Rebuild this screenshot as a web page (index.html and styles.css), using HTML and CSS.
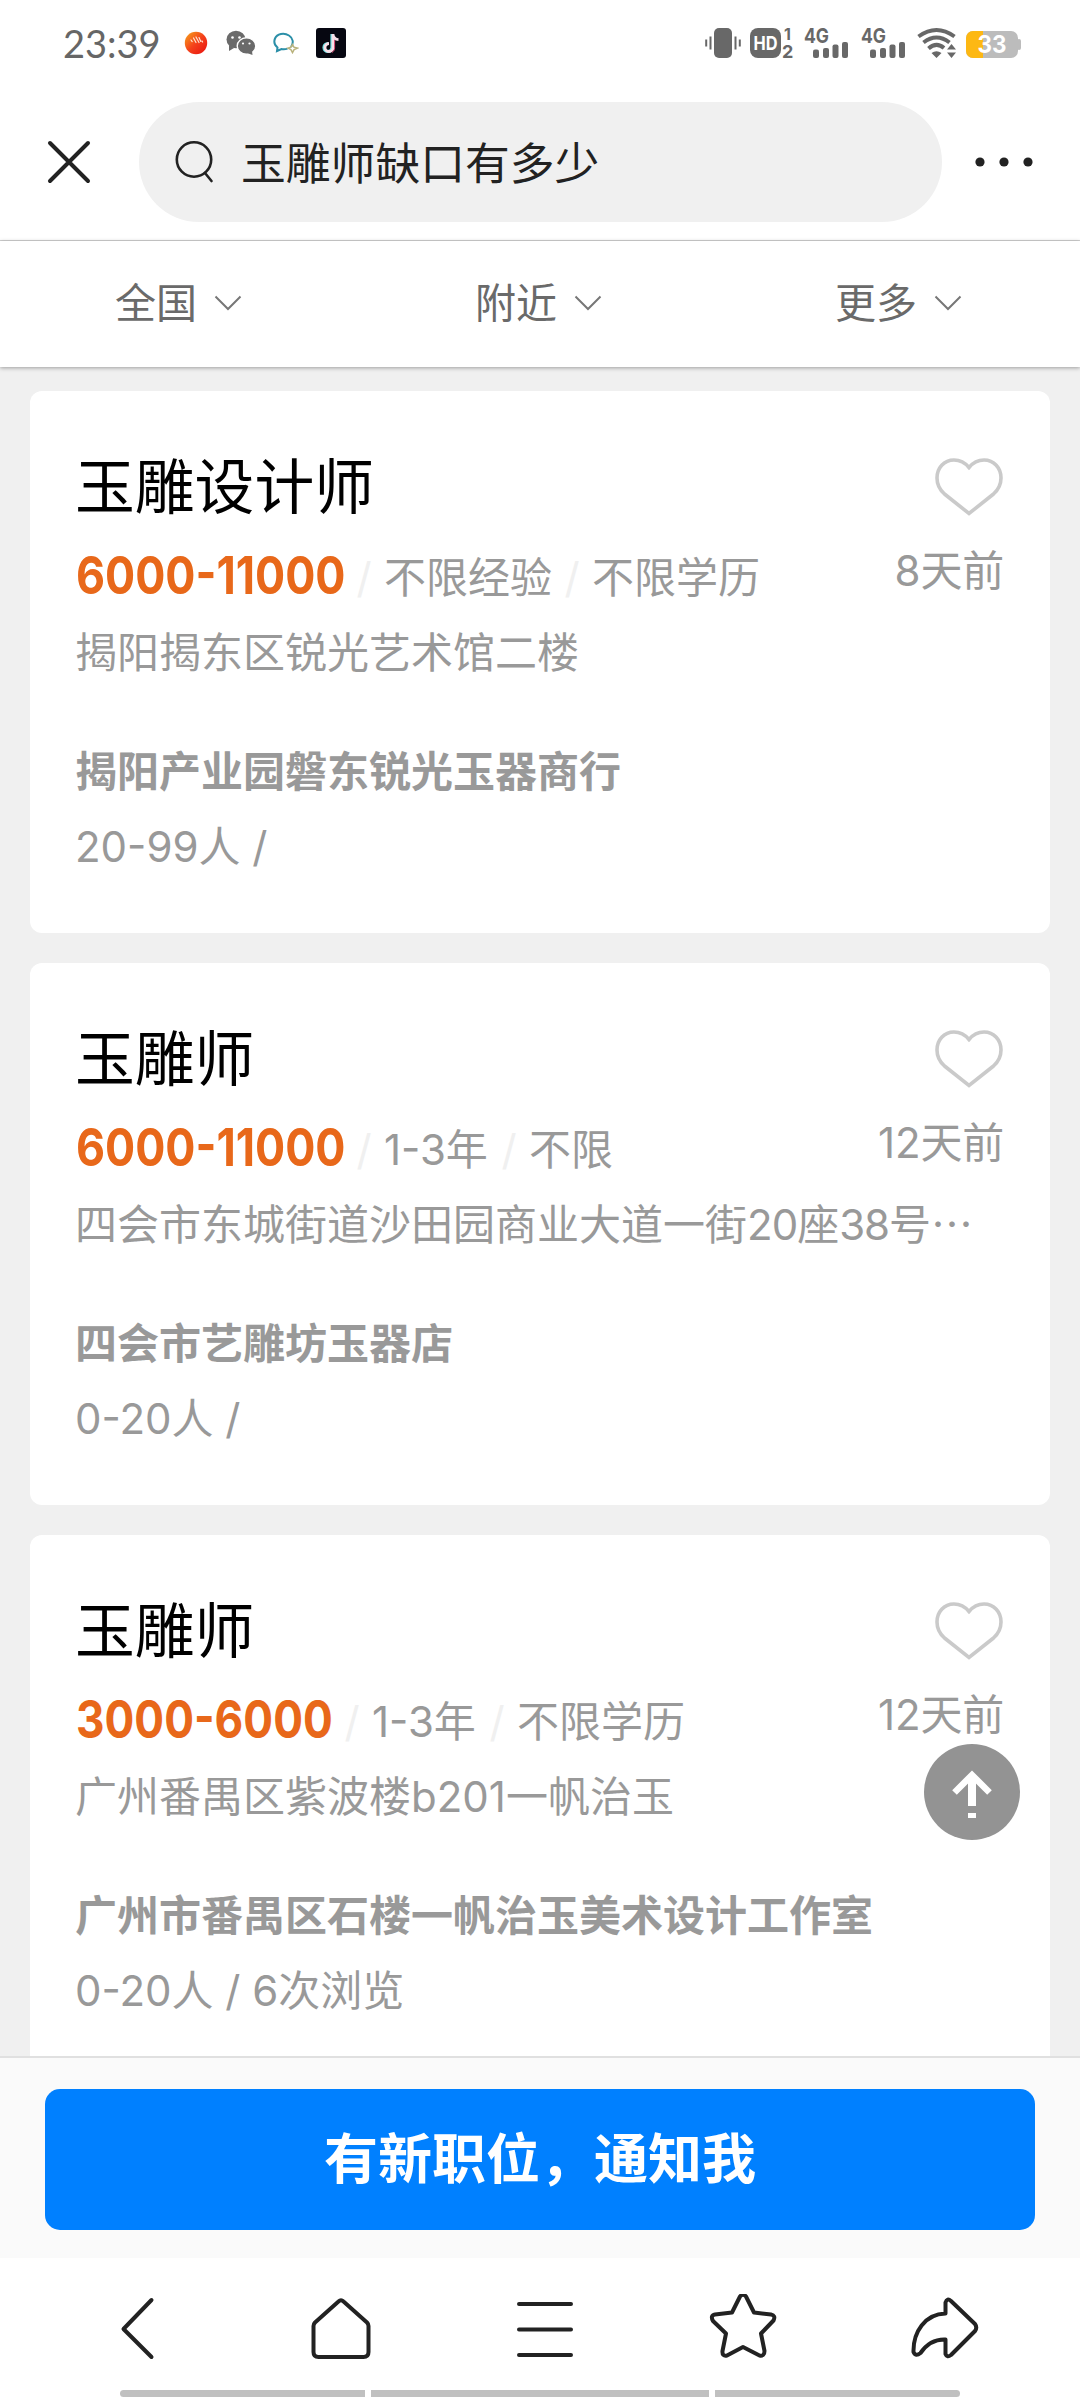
FILE: index.html
```html
<!DOCTYPE html>
<html lang="zh-CN">
<head>
<meta charset="utf-8">
<title>玉雕师缺口有多少</title>
<link rel="stylesheet" href="styles.css">
</head>
<body>
<svg width="0" height="0" class="defs">
  <symbol id="heart" viewBox="0 0 68 58"><path d="M34 9.500C29.500 4 24.500 2 19 2C9 2 2 10 2 20C2 27.500 5 32 9.500 36L34 55.500L58.500 36C63 32 66 27.500 66 20C66 10 59 2 49 2C43.500 2 38.500 4 34 9.500Z" fill="none" stroke="#cacaca" stroke-width="3.600"/></symbol>
  <symbol id="chevron" viewBox="0 0 28 16"><path d="M1.500 1.500L14 14L26.500 1.500" fill="none" stroke="#777" stroke-width="2"/></symbol>
  <symbol id="bars" viewBox="0 0 46 32">
    <rect x="9" y="22.500" width="6" height="8.500" rx="2"/><rect x="19" y="21" width="6" height="10" rx="2"/><rect x="28.500" y="17.500" width="6" height="13.500" rx="2"/><rect x="38" y="15" width="6" height="16" rx="2"/>
  </symbol>
</svg>
<div class="screen">
  <header class="status">
    <div class="status-left">
      <span class="time">23:39</span>
      <svg class="app-ball" width="24" height="24" viewBox="0 0 24 24">
        <defs><linearGradient id="fire" x1="0" y1="0" x2="1" y2="1"><stop offset="0" stop-color="#f6a81c"/><stop offset=".5" stop-color="#f4411b"/><stop offset="1" stop-color="#e8100f"/></linearGradient></defs>
        <circle cx="12" cy="12" r="11.200" fill="url(#fire)"/>
        <path d="M7 9l1.200 1.600M9.500 7l2.500 4.500M12 6l3 5.500M15 6.500l1.800 4M18 10l.6 1" stroke="#ffe3d0" stroke-width="1.200" stroke-linecap="round"/>
      </svg>
      <svg class="app-wechat" width="30" height="26" viewBox="0 0 30 26">
        <ellipse cx="10" cy="9.500" rx="9.500" ry="8.800" fill="#6a6a6a"/><path d="M3 15l0 6 5-3z" fill="#6a6a6a"/>
        <ellipse cx="20.500" cy="16" rx="9.300" ry="8.200" fill="#6a6a6a" stroke="#fff" stroke-width="1.400"/><path d="M21 23l5.500 2-.5-4z" fill="#6a6a6a"/>
        <circle cx="6.500" cy="7.500" r="1.300" fill="#fff"/><circle cx="13.500" cy="7.500" r="1.300" fill="#fff"/><circle cx="17" cy="13.500" r="1.100" fill="#fff"/><circle cx="23.500" cy="13.500" r="1.100" fill="#fff"/>
      </svg>
      <svg class="app-bubble" width="26" height="22" viewBox="0 0 26 22" fill="none" stroke-width="2">
        <path d="M18 15c3-4 2-9-2-11.500C11 .2 4 1.600 2 6.500C.6 10 2 13.500 4.500 15.500L4 19l4.500-2c2 .4 4 .3 6-.4" stroke="#2b8fa8"/>
        <path d="M19.500 12.500l1.400 2.600 3.600 1-3.400 1.500-1.600 3-1.600-3-3-1.400 3-1.100z" stroke="#b9b27c" stroke-width="1.500"/>
      </svg>
      <svg class="app-note" width="30" height="30" viewBox="0 0 30 30">
        <rect width="30" height="30" rx="3" fill="#060711"/>
        <path d="M16 6v13.500a4 4 0 1 1-4-4" fill="none" stroke="#6fe4e8" stroke-width="3.200"/>
        <path d="M17 6v13.500a4 4 0 1 1-4-4M17 6.500c.4 3 2.500 5 5.500 5.200" fill="none" stroke="#f9dfe8" stroke-width="2.800"/>
        <path d="M18.600 12v8c0 2-1 3.500-2.600 4.400" fill="none" stroke="#e0507a" stroke-width="1"/>
      </svg>
    </div>
    <svg class="status-right" width="320" height="48" viewBox="0 -8 320 48" fill="#686868">
      <rect x="9" y="1" width="18" height="30" rx="5"/>
      <path d="M5.500 9.500v13M1.200 12.500v7M30.500 9.500v13M34.800 12.500v7" stroke="#686868" stroke-width="2"/>
      <rect x="45" y="1" width="31" height="30" rx="8"/>
      <text x="60.500" y="23" font-size="19" text-anchor="middle" class="tiny" fill="#fff" textLength="24" lengthAdjust="spacingAndGlyphs">HD</text>
      <text x="79" y="13" font-size="16" class="tiny">1</text><text x="77" y="31" font-size="18" class="tiny">2</text>
      <text x="99" y="15.500" font-size="20" class="tiny" textLength="25" lengthAdjust="spacingAndGlyphs">4G</text>
      <use href="#bars" x="99" y="0" width="46" height="32"/>
      <text x="156" y="15.500" font-size="20" class="tiny" textLength="25" lengthAdjust="spacingAndGlyphs">4G</text>
      <use href="#bars" x="156" y="0" width="46" height="32"/>
      <g fill="none" stroke="#686868" stroke-width="4"><path d="M213.500 9.500Q231.500 -3.500 249.500 9.500"/><path d="M218.500 15.500Q231.500 5.500 244.500 15.500"/><path d="M223.500 21.500Q231.500 14.500 239 21"/></g>
      <path d="M226.500 26Q231.500 22.500 236.500 26L231.500 31zM242 22.500l4.500-5.500 4.500 5.500zM242 25.500l4.500 5.500 4.500-5.500z"/>
      <clipPath id="cell"><rect x="261" y="4" width="52" height="27" rx="7"/></clipPath>
      <g clip-path="url(#cell)"><rect x="261" y="4" width="52" height="27" fill="#bcbcbc"/><rect x="261" y="4" width="17" height="27" fill="#fdb813"/></g>
      <rect x="312" y="12" width="4" height="11" rx="2" fill="#bcbcbc"/>
      <text x="287" y="26" font-size="24" text-anchor="middle" class="tiny" fill="#fff" textLength="29" lengthAdjust="spacingAndGlyphs">33</text>
    </svg>
  </header>

  <nav class="searchbar">
    <svg class="close" width="44" height="44" viewBox="0 0 44 44"><path d="M3 3L41 41M41 3L3 41" stroke="#222" stroke-width="4" stroke-linecap="round"/></svg>
    <div class="search">
      <svg width="40" height="44" viewBox="0 0 40 44" fill="none" stroke="#222" stroke-width="2.600" stroke-linecap="round"><circle cx="19" cy="19.500" r="17.200"/><path d="M30 33L36.500 41"/></svg>
      <span>玉雕师缺口有多少</span>
    </div>
    <svg class="dots" width="60" height="12" viewBox="0 0 60 12" fill="#222"><circle cx="6" cy="6" r="4.600"/><circle cx="30" cy="6" r="4.600"/><circle cx="54" cy="6" r="4.600"/></svg>
  </nav>

  <div class="filters">
    <div class="filter">全国<svg width="28" height="16"><use href="#chevron"/></svg></div>
    <div class="filter">附近<svg width="28" height="16"><use href="#chevron"/></svg></div>
    <div class="filter">更多<svg width="28" height="16"><use href="#chevron"/></svg></div>
  </div>

  <main class="list">
    <article class="card">
      <div class="head"><h2>玉雕设计师</h2><svg width="68" height="58"><use href="#heart"/></svg></div>
      <div class="row"><span class="pay long"><b>6000-11000</b></span><i>/</i><span>不限经验</span><i>/</i><span>不限学历</span><time>8天前</time></div>
      <p class="addr">揭阳揭东区锐光艺术馆二楼</p>
      <p class="firm">揭阳产业园磐东锐光玉器商行</p>
      <p class="size">20-99人 /</p>
    </article>
    <article class="card">
      <div class="head"><h2>玉雕师</h2><svg width="68" height="58"><use href="#heart"/></svg></div>
      <div class="row"><span class="pay long"><b>6000-11000</b></span><i>/</i><span class="years">1-3年</span><i>/</i><span>不限</span><time>12天前</time></div>
      <p class="addr">四会市东城街道沙田园商业大道一街<span class="num">20</span>座<span class="num">38</span>号<span class="more">…</span></p>
      <p class="firm">四会市艺雕坊玉器店</p>
      <p class="size">0-20人 /</p>
    </article>
    <article class="card">
      <div class="head"><h2>玉雕师</h2><svg width="68" height="58"><use href="#heart"/></svg></div>
      <div class="row"><span class="pay short"><b>3000-6000</b></span><i>/</i><span class="years">1-3年</span><i>/</i><span>不限学历</span><time>12天前</time></div>
      <p class="addr">广州番禺区紫波楼b201一帆治玉</p>
      <p class="firm">广州市番禺区石楼一帆治玉美术设计工作室</p>
      <p class="size">0-20人 / 6次浏览</p>
    </article>
    <button class="to-top" aria-label="返回顶部"><svg width="96" height="96" viewBox="0 0 96 96"><path d="M30.500 48.500L48 31L65.500 48.500" fill="none" stroke="#fff" stroke-width="6.500"/><rect x="44" y="31" width="8" height="31" fill="#fff"/><rect x="44" y="69" width="8" height="5" fill="#fff"/></svg></button>
  </main>

  <div class="notify"><button>有新职位，通知我</button></div>

  <footer class="toolbar">
    <div class="icons">
      <svg width="68" height="68" viewBox="0 0 68 68"><path d="M49.500 6L21.500 35L49.500 63"/></svg>
      <svg width="68" height="68" viewBox="0 0 68 68"><g transform="translate(3 1)"><path d="M31.500 6.500Q34 4 36.500 6.500L60 27.500Q61.500 29 61.500 31V57Q61.500 62 56.500 62H11.500Q6.500 62 6.500 57V31Q6.500 29 8 27.500Z"/></g></svg>
      <svg width="68" height="68" viewBox="0 0 68 68"><path d="M12 10H64M12 35.500H64M12 61H64"/></svg>
      <svg width="68" height="68" viewBox="0 0 68 68"><path d="M31 2.500Q34 -1 37 2.500L45 18.500L62 20.500Q67 21.500 64.500 26.500L52 39.500L55.500 57Q55.500 62.500 50.500 61.500L34 53L18 61.500Q13 62.500 13.500 57L17 39.500L4 27Q1 21.500 6 20.500L23 18.500Z"/></svg>
      <svg width="68" height="68" viewBox="0 0 68 68"><path d="M34.500 19.500V8.500Q36 3.500 40 7L64 30Q66.500 33.500 64 37L40 61Q36 64 34.500 60V45.500C23 45 15 51 9.500 59Q4.500 63 2.500 58C2 38 14 20 34.500 19.500Z"/></svg>
    </div>
    <div class="grips"><span></span><span></span><span></span></div>
  </footer>
</div>
</body>
</html>
```
FILE: styles.css
```css
* { box-sizing: border-box; }
body, h2, p { margin: 0; }
button { border: 0; padding: 0; font: inherit; }
svg { display: block; flex: none; }
.defs { position: absolute; }

.screen {
  width: 1080px;
  height: 2400px;
  display: flex;
  flex-direction: column;
  overflow: hidden;
  background: #fff;
  font-family: Inter, "Noto Sans CJK SC", sans-serif;
}

.status {
  height: 86px;
  flex: none;
  display: flex;
  align-items: center;
  justify-content: space-between;
  padding: 0 55px 0 62px;
}
.status-left { display: flex; align-items: center; }
.time {
  width: 122px;
  padding-left: 1px;
  font: 38px/44px Lato, sans-serif;
  color: #666;
}
.app-wechat { margin-left: 18px; }
.app-bubble { margin-left: 17px; }
.app-note { margin-left: 17px; }
.tiny { font-family: Inter, sans-serif; font-weight: 700; }

.searchbar {
  height: 155px;
  flex: none;
  display: flex;
  align-items: center;
  padding: 0 46px 3px 47px;
  border-bottom: 1px solid #d2d2d2;
}
.search {
  width: 803px;
  height: 120px;
  margin-left: 48px;
  padding-left: 36px;
  display: flex;
  align-items: center;
  gap: 26px;
  border-radius: 60px;
  background: #f0f0f0;
  color: #222;
  font-size: 44.800px;
  line-height: 60px;
}
.search span { padding-top: 4px; }
.dots { margin-left: 32px; }

.filters {
  height: 126px;
  flex: none;
  display: grid;
  grid-template-columns: repeat(3, 360px);
  align-items: center;
  background: #fff;
  box-shadow: 0 1px 4px rgba(0, 0, 0, .35);
  z-index: 1;
}
.filter {
  display: flex;
  align-items: center;
  justify-content: center;
  gap: 17px;
  padding: 0 3px 2px 0;
  color: #6a6a6a;
  font-size: 41px;
  line-height: 60px;
}

.list {
  position: relative;
  height: 1689px;
  flex: none;
  overflow: hidden;
  display: flex;
  flex-direction: column;
  gap: 30px;
  padding: 24px 30px 0;
  background: #f0f0f0;
}
.card {
  height: 542px;
  flex: none;
  padding: 56px 47px 0 45px;
  border-radius: 12px;
  background: #fff;
  color: #999;
  font-size: 42px;
  line-height: 60px;
}
.head {
  height: 80px;
  display: flex;
  align-items: center;
  justify-content: space-between;
}
.head h2 {
  color: #000;
  font-size: 59.800px;
  font-weight: 400;
  line-height: 80px;
}
.row {
  height: 76px;
  margin-top: 13px;
  display: flex;
  align-items: center;
}
.row i { width: 40px; text-align: center; font-style: normal; color: #f0f0f0; }
.row time { margin: 0 -1px 0 auto; padding-bottom: 14px; letter-spacing: -.2px; }
.pay { color: #e8681a; font-size: 52px; line-height: 60px; padding: 0 0 4px 1px; white-space: nowrap; }
.pay b { display: inline-block; transform-origin: 0 50%; transform: scaleX(.86); }
.long { width: 269px; }
.short { width: 257px; }
.short b { transform: scaleX(.85); }
.years { width: 105px; white-space: nowrap; }
.addr { height: 60px; margin-top: 7px; white-space: nowrap; }
.num { letter-spacing: -1px; }
.more { font-family: "Noto Sans CJK SC", sans-serif; line-height: 1; }
.firm { margin-top: 59px; font-weight: 700; }
.size { margin-top: 15px; }

.to-top {
  position: absolute;
  left: 924px;
  top: 1377px;
  width: 96px;
  height: 96px;
  border-radius: 50%;
  background: #939393;
}

.notify {
  height: 202px;
  flex: none;
  padding: 31px 45px 0;
  border-top: 2px solid #e0e0e0;
  background: #fafafa;
}
.notify button {
  width: 990px;
  height: 141px;
  border-radius: 15px;
  background: #0080ff;
  color: #fff;
  font-size: 54px;
  font-weight: 700;
  line-height: 139px;
}

.toolbar { flex: 1; padding-top: 36px; }
.icons {
  display: flex;
  justify-content: space-between;
  padding: 0 101px 0 102px;
}
.icons svg {
  fill: none;
  stroke: #222;
  stroke-width: 4;
  stroke-linecap: round;
  stroke-linejoin: round;
}
.grips {
  display: grid;
  grid-template-columns: 245px 338px 245px;
  gap: 6px;
  margin: 28px 0 0 120px;
}
.grips span { height: 7px; background: #c0c0c0; }
.grips span:first-child { border-radius: 4px 0 0 4px; }
.grips span:last-child { border-radius: 0 4px 4px 0; }
```
